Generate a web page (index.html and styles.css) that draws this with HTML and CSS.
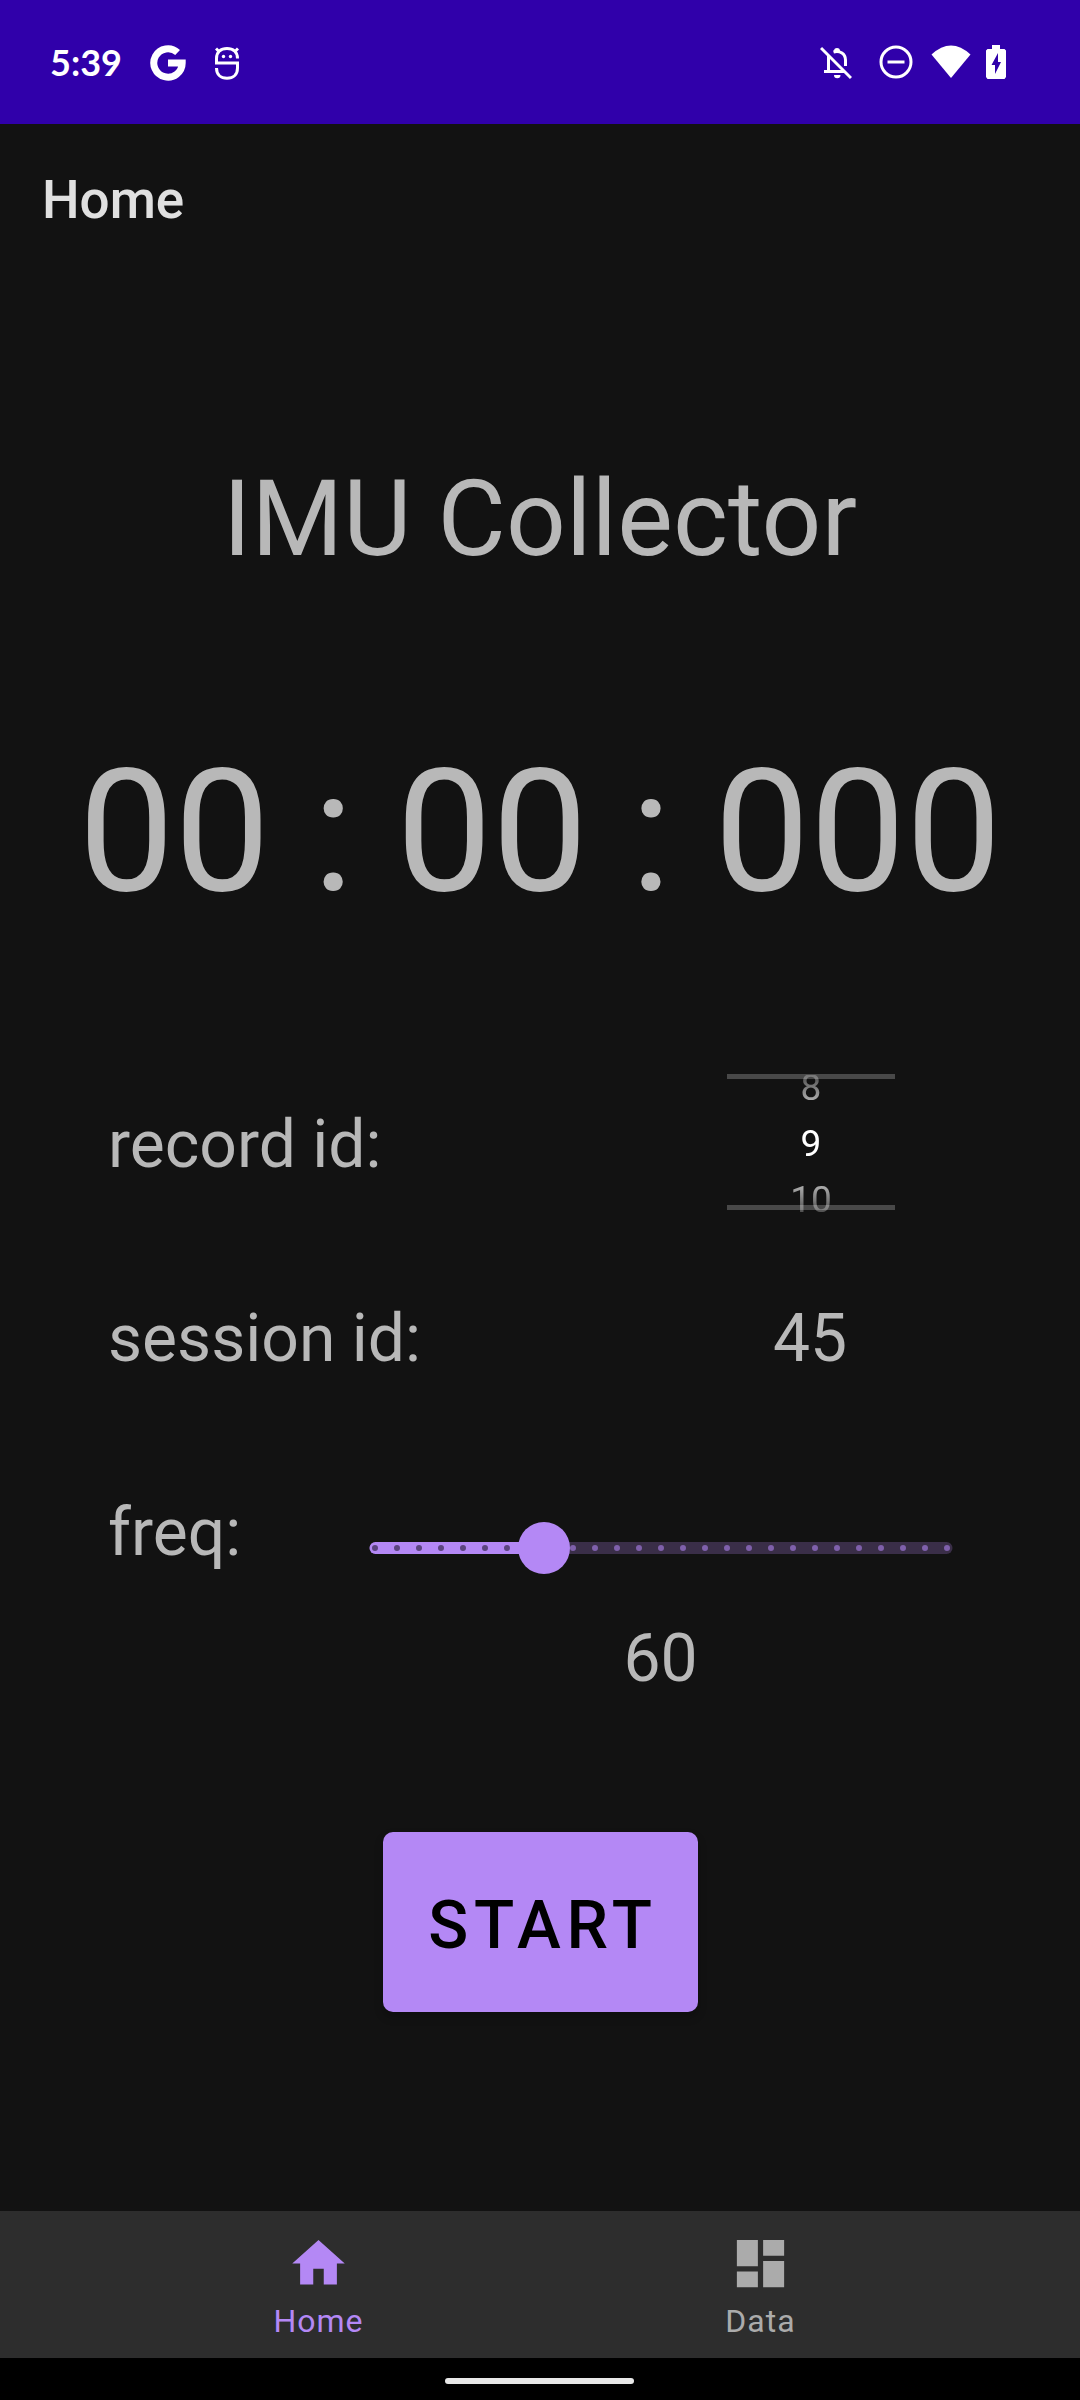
FILE: index.html
```html
<!DOCTYPE html>
<html lang="en">
<head>
<meta charset="utf-8">
<title>Home</title>
<link rel="stylesheet" href="styles.css">
</head>
<body>
<header class="status">
  <span class="clock">5:39</span>
  <svg class="ic-g" width="36" height="36" viewBox="0 0 36 36"><path d="M27.6 7.5A14.2 14.2 0 1 0 32.2 18H18" fill="none" stroke="#fff" stroke-width="7"/></svg>
  <svg class="ic-s" width="24" height="34" viewBox="0 0 24 34" fill="none" stroke="#fff" stroke-width="3"><path d="M22.5 12.5C22.5 5.500 18 2.500 12 2.500S1.500 5.500 1.500 12.500V17H22.500V22C22.500 29 18 32.200 12 32.200S1.500 29 1.500 22M1 2.500L4 5.500M23 2.500L20 5.500"/><g fill="#fff" stroke="none"><circle cx="8.500" cy="10.500" r="1.700"/><circle cx="15.500" cy="10.500" r="1.700"/></g></svg>
  <span class="spacer"></span>
  <svg class="ic-bell" width="32" height="34" viewBox="0 0 32 34" fill="none" stroke="#fff" stroke-width="3"><path d="M1 2L31 32M8.500 10V26M4 25.500H25M13.500 6C20 4 25.500 8 25.500 14V20"/><path d="M14 5a3 3 0 0 1 6 0zM14 29h6.500a3.200 3.200 0 0 1-6.500 0z" fill="#fff" stroke="none"/></svg>
  <svg class="ic-dnd" width="34" height="34" viewBox="0 0 34 34" fill="none" stroke="#fff" stroke-width="3"><circle cx="17" cy="17" r="15"/><path d="M8.500 17H25.500"/></svg>
  <svg class="ic-wifi" width="40" height="34" viewBox="0 0 40 34"><path d="M.5 9.500Q20-8.500 39.500 9.500L20 33z" fill="#fff"/></svg>
  <svg class="ic-bat" width="20" height="34" viewBox="0 0 20 34"><path fill="#fff" fill-rule="evenodd" d="M6 0H14V4H18.500L20 5.500V32L18.500 34H1.500L0 32V5.500L1.500 4H6zM12 8L5.500 20H9V29L15 17H12z"/></svg>
</header>
<h1 class="appbar">Home</h1>
<main class="content">
  <div class="title">IMU Collector</div>
  <div class="timer">00 : 00 : 000</div>
  <div class="row record">
    <span>record id:</span>
    <div class="picker"><div class="wheel"><span>8</span><span class="current">9</span><span>10</span></div></div>
  </div>
  <div class="row session"><span>session id:</span><span class="session-value">45</span></div>
  <div class="row freq">
    <span>freq:</span>
    <svg class="slider" width="584" height="56" viewBox="0 0 584 56">
      <rect x="0.500" y="22" width="583" height="12" rx="6" fill="#3a2e48"/>
      <path d="M6.500 28H175" stroke="#b488f5" stroke-width="12" stroke-linecap="round"/>
      <path d="M6 28H160" stroke="#5c4480" stroke-width="6" stroke-linecap="round" stroke-dasharray="0 22"/>
      <path d="M204 28H579" stroke="#7f60ab" stroke-width="6" stroke-linecap="round" stroke-dasharray="0 22"/>
      <circle cx="175" cy="28" r="26" fill="#b488f5"/>
    </svg>
  </div>
  <div class="freq-value">60</div>
  <button class="start">START</button>
</main>
<nav class="tabs">
  <a class="tab active"><svg width="63" height="63" viewBox="0 0 24 24"><path fill="currentColor" d="M10 20v-6h4v6h5v-8h3L12 3 2 12h3v8z"/></svg><span>Home</span></a>
  <a class="tab"><svg width="63" height="63" viewBox="0 0 24 24"><path fill="currentColor" d="M3 13h8V3H3v10zm0 8h8v-6H3v6zm10 0h8V11h-8v10zm0-18v6h8V3h-8z"/></svg><span>Data</span></a>
</nav>
<footer class="gesture"><span class="pill"></span></footer>
</body>
</html>
```
FILE: styles.css
```css
* { box-sizing: border-box; }
body {
  margin: 0;
  width: 1080px;
  height: 2400px;
  display: flex;
  flex-direction: column;
  background: #121212;
  color: #b8b8b8;
  font-family: Roboto, sans-serif;
}
svg { display: block; flex: none; }
.status {
  height: 124px;
  display: flex;
  align-items: center;
  padding: 0 74px 0 50px;
  background: #3000aa;
  color: #fff;
}
.clock { width: 101px; font: 700 36px Lato, sans-serif; }
.ic-g { margin-left: -1px; margin-top: 2px; }
.ic-s { margin-left: 29px; margin-top: 2px; }
.spacer { flex: 1; }
.ic-bell { margin-top: 2px; }
.ic-dnd { margin-left: 27px; }
.ic-wifi { margin-left: 18px; }
.ic-bat { margin-left: 15px; }
.appbar {
  margin: 0;
  height: 147px;
  padding-left: 42px;
  font-size: 53px;
  font-weight: 500;
  line-height: 152px;
  color: #e0e0e0;
}
.content {
  flex: 1;
  display: flex;
  flex-direction: column;
  align-items: center;
  font-size: 66px;
}
.title { margin-top: 179px; font-size: 105px; line-height: 140px; letter-spacing: .1px; }
.timer { margin-top: 142px; font-size: 170.600px; line-height: 200px; white-space: nowrap; }
.row {
  width: 100%;
  padding: 0 127px 0 108px;
  display: flex;
  align-items: center;
  justify-content: space-between;
  line-height: 78px;
}
.record { margin-top: 142px; height: 136px; }
.record > span { padding-top: 6px; }
.picker {
  width: 168px;
  height: 136px;
  margin-right: 58px;
  border-top: 5px solid #484848;
  border-bottom: 5px solid #484848;
}
.wheel {
  height: 138px;
  margin-top: -4px;
  display: flex;
  flex-direction: column;
  align-items: center;
  justify-content: center;
  font-size: 37px;
  line-height: 56px;
  color: #fff;
  -webkit-mask-image: linear-gradient(rgba(0, 0, 0, .25), #000 48px, #000 88px, rgba(0, 0, 0, .25));
  mask-image: linear-gradient(rgba(0, 0, 0, .25), #000 48px, #000 88px, rgba(0, 0, 0, .25));
}
.session { margin-top: 90px; }
.session-value { width: 168px; margin-right: 59px; text-align: center; }
.freq { margin-top: 112px; height: 86px; }
.slider { margin-top: 30px; }
.freq-value { margin: 44px 0 0 241px; line-height: 78px; }
.start {
  width: 315px;
  height: 180px;
  margin-top: 134px;
  padding: 6px 0 0 6px;
  border: 0;
  border-radius: 10px;
  background: #b488f5;
  color: #000;
  font: 500 66px Roboto, sans-serif;
  letter-spacing: 5.860px;
  box-shadow: 0 5px 8px rgba(0, 0, 0, .25);
}
.tabs {
  height: 147px;
  padding-right: 1px;
  display: flex;
  justify-content: center;
  background: #2d2d2d;
  color: #ababab;
}
.tab {
  width: 442px;
  padding-top: 21px;
  display: flex;
  flex-direction: column;
  align-items: center;
  font-size: 32px;
  line-height: 40px;
  letter-spacing: 1px;
}
.tab span { margin-top: 6px; }
.active { color: #b488f5; }
.gesture {
  height: 42px;
  display: flex;
  justify-content: center;
  align-items: center;
  background: #000;
}
.pill { width: 189px; height: 6px; margin: 4px 1px 0 0; border-radius: 3px; background: #e8e8e8; }
```
